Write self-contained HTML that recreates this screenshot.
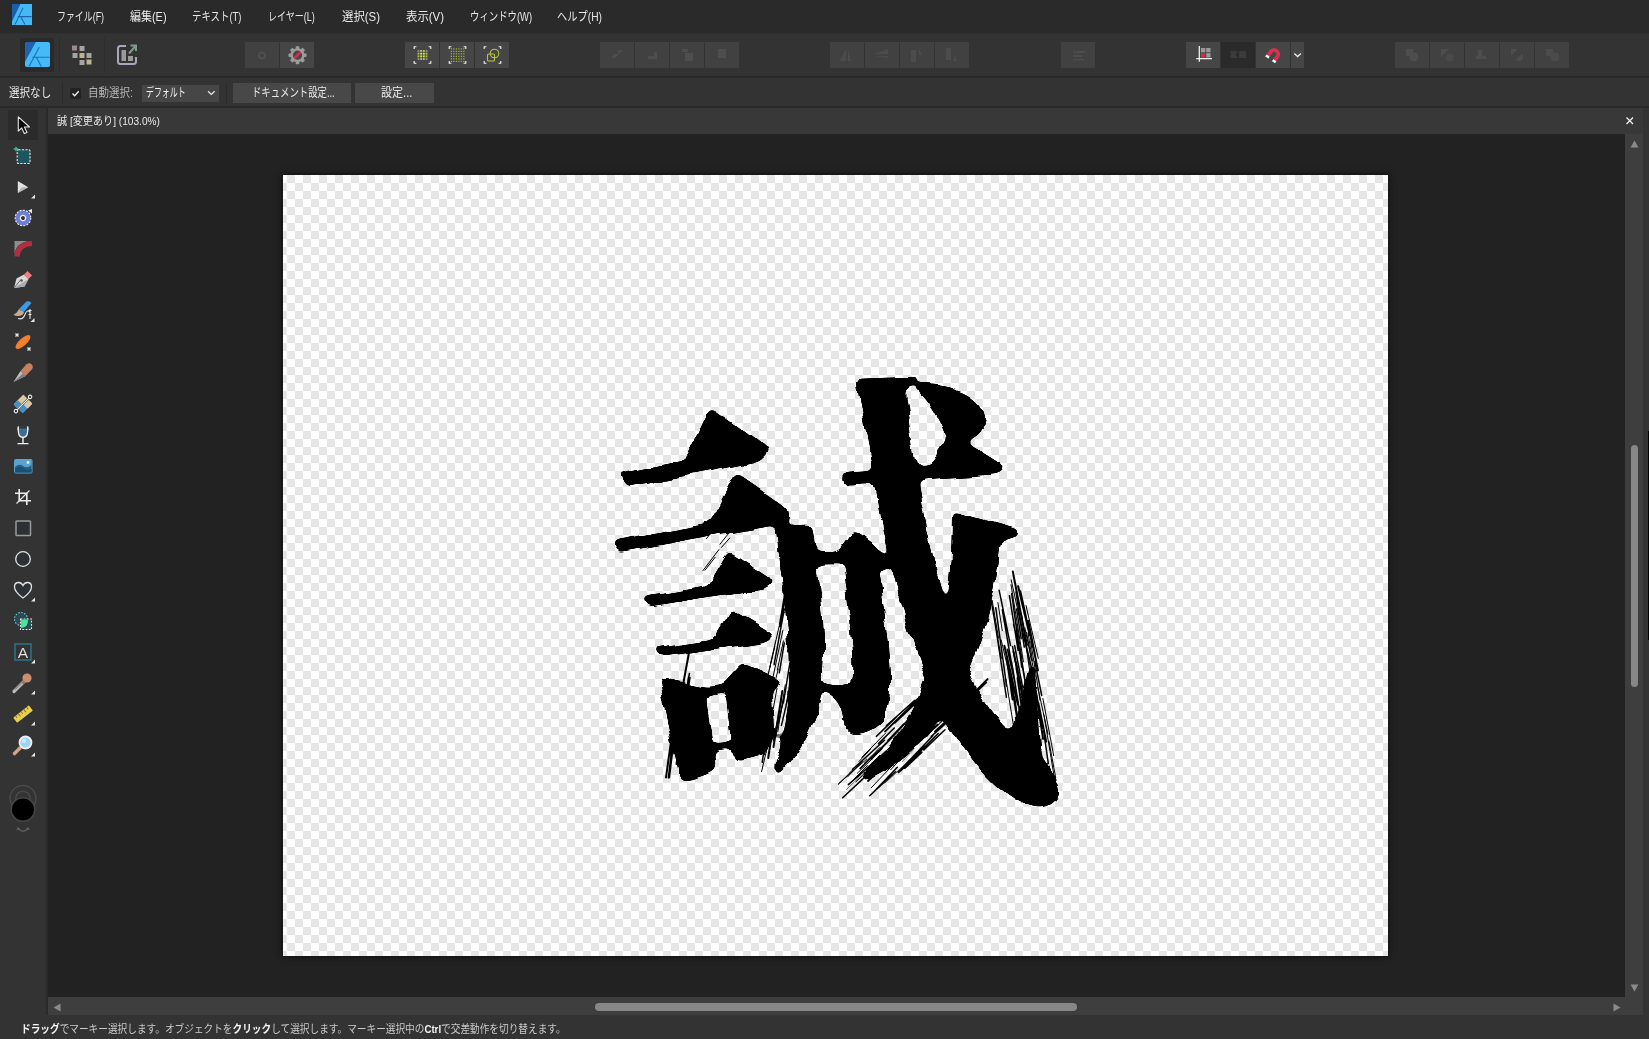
<!DOCTYPE html>
<html lang="ja">
<head>
<meta charset="utf-8">
<title>誠 [変更あり] (103.0%)</title>
<style>
*{box-sizing:border-box;margin:0;padding:0}
html,body{width:1649px;height:1039px;overflow:hidden;background:#333}
body{position:relative;font-family:"Liberation Sans","Noto Sans CJK JP",sans-serif;font-size:12px;color:#e6e6e6;-webkit-font-smoothing:antialiased}
.abs{position:absolute}
#menubar span,.t{filter:grayscale(1)}
.t{position:absolute;white-space:nowrap;line-height:18px;height:18px;transform-origin:0 50%;color:#e8e8e8}
.t b{color:#f4f4f4;font-weight:700}
#menubar{left:0;top:0;width:1649px;height:33px;background:#2a2a2a}
#menubar span{position:absolute;top:1px;height:33px;line-height:33px;white-space:nowrap;color:#e8e8e8;font-size:12px;transform-origin:0 50%}
#toolbar{left:0;top:33px;width:1649px;height:43px;background:#333;border-top:1px solid #2f2f2f}
#ctxbar{left:0;top:76px;width:1649px;height:32px;background:#333;border-top:2px solid #292929;border-bottom:2px solid #292929}
.tb{position:absolute;top:8px;height:26px;width:34px;background:#464646}
.tb.dim{background:#414141}
.tb.dark{background:#2a2a2a}
.tb svg{display:block}
#tools{left:0;top:108px;width:48px;height:931px;background:#333;border-right:2px solid #2a2a2a}
#tabbar{left:48px;top:108px;width:1595px;height:26px;background:#383838}
#work{left:48px;top:134px;width:1577px;height:863px;background:#222222}
#vscroll{left:1625px;top:134px;width:18px;height:881px;background:#3e3e3e}
#hscroll{left:48px;top:997px;width:1578px;height:18px;background:#3e3e3e}
#status{left:0;top:1015px;width:1649px;height:24px;background:#333}
#doc{left:283px;top:175px;width:1105px;height:781px;background-color:#fff;overflow:hidden;box-shadow:0 0 6px 1px rgba(0,0,0,.55);
background-image:conic-gradient(#e6e6e6 25%,#fff 0 50%,#e6e6e6 0 75%,#fff 0);background-size:16px 16px;background-position:-4px 0}
.ink{position:absolute;left:0;top:0;width:440px;height:470px;line-height:440px;font-size:440px;font-family:"Noto Serif CJK SC",serif;color:#000;transform-origin:0 0;paint-order:stroke fill;}
#inkA{font-weight:900;-webkit-text-stroke:0px #000;clip-path:polygon(-20px -20px,173.5px -20px,173.5px 186px,173.5px 186px,173.5px 292px,166px 300px,159px 320px,156px 360px,151px 400px,143px 422px,127px 445px,109px 470px,-20px 470px);transform:matrix3d(1.106565,-0.3706125,0,-0.0003986969,0.8914208,1.958157,0,0.001756807,0,0,1,0,278.5585,207.5127,0,1)}
#inkB{font-weight:700;-webkit-text-stroke:0px #000;clip-path:polygon(600px -20px,265px -20px,265px 185px,172.5px 185px,172.5px 186px,172.5px 292px,165px 300px,158px 320px,155px 360px,150px 400px,142px 422px,126px 445px,108px 470px,600px 470px);transform:matrix3d(0.4382253,-0.2217433,0,-0.0005457777,0.03723457,0.7697025,0,-0.0001223049,0,0,1,0,349.09,205.9681,0,1)}
#inkwrap{position:absolute;left:0;top:0;width:1105px;height:781px;filter:url(#brush)}
</style>
</head>
<body>
<div id="menubar" class="abs">
<svg class="abs" style="left:12px;top:4px" width="20" height="21" viewBox="0 0 21 19" preserveAspectRatio="none"><rect width="21" height="19" rx="1.5" fill="#2f9ee6"/><path d="M0 0H9L0 16Z" fill="#1c5fa8"/><path d="M9 0H21V19H0V16Z" fill="#46b9f5"/><path d="M3.2 18.6 11.6 3.4 M6 11.4H20.6 M9.2 11.4 13.6 18.6" stroke="#1a64ad" stroke-width="1" fill="none"/></svg>
<span id="m1" style="transform:scaleX(0.743);left:57px">ファイル(F)</span>
<span id="m2" style="transform:scaleX(0.915);left:130px">編集(E)</span>
<span id="m3" style="transform:scaleX(0.786);left:192px">テキスト(T)</span>
<span id="m4" style="transform:scaleX(0.75);left:268px">レイヤー(L)</span>
<span id="m5" style="transform:scaleX(0.95);left:342px">選択(S)</span>
<span id="m6" style="transform:scaleX(0.95);left:406px">表示(V)</span>
<span id="m7" style="transform:scaleX(0.782);left:470px">ウィンドウ(W)</span>
<span id="m8" style="transform:scaleX(0.854);left:557px">ヘルプ(H)</span>
</div>
<div id="toolbar" class="abs">
<div class="abs" style="left:20px;top:4px;width:34px;height:34px;background:#2a2a2a"></div>
<svg class="abs" style="left:25px;top:8px" width="25" height="25" viewBox="0 0 25 25"><rect width="25" height="25" rx="2.5" fill="#2f9ee6"/><path d="M0 2.5Q0 0 2.5 0H11L0 20Z" fill="#1f62ad"/><path d="M11 0H22.5Q25 0 25 2.5V22.5Q25 25 22.500 25H2.500Q0 25 0 22.500V20Z" fill="#46baf6"/><path d="M4 24.500 14.300 5 M7.400 15.300H24.600 M11.300 15.300 16.300 24.500" stroke="#1f6fbd" stroke-width="1.100" fill="none"/></svg>
<div class="abs" style="left:59px;top:3px;width:1px;height:36px;background:#2d2d2d"></div>
<div class="abs" style="left:104px;top:3px;width:1px;height:36px;background:#2d2d2d"></div>
<svg class="abs" style="left:71px;top:10px" width="22" height="22" viewBox="0 0 22 22"><rect x="1" y="1.500" width="5" height="5" fill="#9d8790"/><rect x="8.500" y="2" width="5" height="5" fill="#a4a4a4"/><rect x="1.500" y="9" width="5" height="5" fill="#a4a4a4"/><rect x="8.500" y="9" width="5" height="5" fill="#bfb187"/><rect x="15.500" y="9" width="5" height="5" fill="#a4a4a4"/><rect x="8.500" y="16" width="5" height="5" fill="#a4a4a4"/><rect x="15.500" y="15.500" width="5" height="5" fill="#bdb58e"/></svg>
<svg class="abs" style="left:116px;top:9px" width="23" height="23" viewBox="0 0 23 23"><path d="M10 3H4.500Q2 3 2 5.500V18.500Q2 21 4.500 21H17.500Q20 21 20 18.500V14" fill="none" stroke="#a8a8bd" stroke-width="2"/><rect x="5.500" y="7" width="4.500" height="11" fill="#9a9a9a"/><rect x="12" y="13" width="5" height="5" fill="#9a9a9a"/><path d="M13 10.500 20 2.500M14.500 2.500H20V8" fill="none" stroke="#7d9b8b" stroke-width="2"/></svg>
<div class="tb dim" style="left:245px;width:34px"><svg width="34" height="26"><circle cx="17" cy="13.500" r="3" fill="none" stroke="#4f4f4f" stroke-width="2"/></svg></div>
<div class="tb " style="left:280px;width:34px"><svg width="34" height="26" viewBox="0 0 34 26"><g transform="translate(17.500 13.200)"><g fill="#9c9c9c"><rect x="-1.800" y="-9" width="3.600" height="4" rx=".8" transform="rotate(0)"/><rect x="-1.800" y="-9" width="3.600" height="4" rx=".8" transform="rotate(45)"/><rect x="-1.800" y="-9" width="3.600" height="4" rx=".8" transform="rotate(90)"/><rect x="-1.800" y="-9" width="3.600" height="4" rx=".8" transform="rotate(135)"/><rect x="-1.800" y="-9" width="3.600" height="4" rx=".8" transform="rotate(180)"/><rect x="-1.800" y="-9" width="3.600" height="4" rx=".8" transform="rotate(225)"/><rect x="-1.800" y="-9" width="3.600" height="4" rx=".8" transform="rotate(270)"/><rect x="-1.800" y="-9" width="3.600" height="4" rx=".8" transform="rotate(315)"/></g><circle r="5.800" fill="none" stroke="#9c9c9c" stroke-width="2.400"/><path d="M-2.300 2.300 2.300-2.300" stroke="#d22f4f" stroke-width="2.600" stroke-linecap="round"/></g></svg></div>
<div class="tb " style="left:405px;width:34px"><svg width="34" height="26" viewBox="0 0 34 26"><path d="M11.399999999999999 4.699999999999999H9.2V6.8999999999999995M11.399999999999999 21.3H9.2V19.1M23.6 4.699999999999999H25.8V6.8999999999999995M23.6 21.3H25.8V19.1" fill="none" stroke="#f2f2f2" stroke-width="1.100"/><rect x="12.50" y="8.00" width="1.900" height="1.900" fill="#8c8c8c"/><rect x="12.50" y="10.70" width="1.900" height="1.900" fill="#b4bf5a"/><rect x="12.50" y="13.40" width="1.900" height="1.900" fill="#b4bf5a"/><rect x="12.50" y="16.10" width="1.900" height="1.900" fill="#8c8c8c"/><rect x="15.20" y="8.00" width="1.900" height="1.900" fill="#b4bf5a"/><rect x="15.20" y="10.70" width="1.900" height="1.900" fill="#d6ea3c"/><rect x="15.20" y="13.40" width="1.900" height="1.900" fill="#d6ea3c"/><rect x="15.20" y="16.10" width="1.900" height="1.900" fill="#b4bf5a"/><rect x="17.90" y="8.00" width="1.900" height="1.900" fill="#b4bf5a"/><rect x="17.90" y="10.70" width="1.900" height="1.900" fill="#d6ea3c"/><rect x="17.90" y="13.40" width="1.900" height="1.900" fill="#d6ea3c"/><rect x="17.90" y="16.10" width="1.900" height="1.900" fill="#b4bf5a"/><rect x="20.60" y="8.00" width="1.900" height="1.900" fill="#8c8c8c"/><rect x="20.60" y="10.70" width="1.900" height="1.900" fill="#b4bf5a"/><rect x="20.60" y="13.40" width="1.900" height="1.900" fill="#b4bf5a"/><rect x="20.60" y="16.10" width="1.900" height="1.900" fill="#8c8c8c"/></svg></div>
<div class="tb " style="left:440px;width:34px"><svg width="34" height="26" viewBox="0 0 34 26"><path d="M11.399999999999999 4.699999999999999H9.2V6.8999999999999995M11.399999999999999 21.3H9.2V19.1M23.6 4.699999999999999H25.8V6.8999999999999995M23.6 21.3H25.8V19.1" fill="none" stroke="#f2f2f2" stroke-width="1.100"/><rect x="10.80" y="6.30" width="1.100" height="1.100" fill="#bccb4a"/><rect x="10.80" y="8.80" width="1.100" height="1.100" fill="#bccb4a"/><rect x="10.80" y="11.30" width="1.100" height="1.100" fill="#bccb4a"/><rect x="10.80" y="13.80" width="1.100" height="1.100" fill="#bccb4a"/><rect x="10.80" y="16.30" width="1.100" height="1.100" fill="#bccb4a"/><rect x="10.80" y="18.80" width="1.100" height="1.100" fill="#bccb4a"/><rect x="13.30" y="6.30" width="1.100" height="1.100" fill="#bccb4a"/><rect x="13.30" y="8.80" width="1.100" height="1.100" fill="#bccb4a"/><rect x="13.30" y="11.30" width="1.100" height="1.100" fill="#bccb4a"/><rect x="13.30" y="13.80" width="1.100" height="1.100" fill="#bccb4a"/><rect x="13.30" y="16.30" width="1.100" height="1.100" fill="#bccb4a"/><rect x="13.30" y="18.80" width="1.100" height="1.100" fill="#bccb4a"/><rect x="15.80" y="6.30" width="1.100" height="1.100" fill="#bccb4a"/><rect x="15.80" y="8.80" width="1.100" height="1.100" fill="#bccb4a"/><rect x="15.80" y="11.30" width="1.100" height="1.100" fill="#bccb4a"/><rect x="15.80" y="13.80" width="1.100" height="1.100" fill="#bccb4a"/><rect x="15.80" y="16.30" width="1.100" height="1.100" fill="#bccb4a"/><rect x="15.80" y="18.80" width="1.100" height="1.100" fill="#bccb4a"/><rect x="18.30" y="6.30" width="1.100" height="1.100" fill="#bccb4a"/><rect x="18.30" y="8.80" width="1.100" height="1.100" fill="#bccb4a"/><rect x="18.30" y="11.30" width="1.100" height="1.100" fill="#bccb4a"/><rect x="18.30" y="13.80" width="1.100" height="1.100" fill="#bccb4a"/><rect x="18.30" y="16.30" width="1.100" height="1.100" fill="#bccb4a"/><rect x="18.30" y="18.80" width="1.100" height="1.100" fill="#bccb4a"/><rect x="20.80" y="6.30" width="1.100" height="1.100" fill="#bccb4a"/><rect x="20.80" y="8.80" width="1.100" height="1.100" fill="#bccb4a"/><rect x="20.80" y="11.30" width="1.100" height="1.100" fill="#bccb4a"/><rect x="20.80" y="13.80" width="1.100" height="1.100" fill="#bccb4a"/><rect x="20.80" y="16.30" width="1.100" height="1.100" fill="#bccb4a"/><rect x="20.80" y="18.80" width="1.100" height="1.100" fill="#bccb4a"/><rect x="23.30" y="6.30" width="1.100" height="1.100" fill="#bccb4a"/><rect x="23.30" y="8.80" width="1.100" height="1.100" fill="#bccb4a"/><rect x="23.30" y="11.30" width="1.100" height="1.100" fill="#bccb4a"/><rect x="23.30" y="13.80" width="1.100" height="1.100" fill="#bccb4a"/><rect x="23.30" y="16.30" width="1.100" height="1.100" fill="#bccb4a"/><rect x="23.30" y="18.80" width="1.100" height="1.100" fill="#bccb4a"/></svg></div>
<div class="tb " style="left:475px;width:34px"><svg width="34" height="26" viewBox="0 0 34 26"><path d="M11.399999999999999 4.699999999999999H9.2V6.8999999999999995M11.399999999999999 21.3H9.2V19.1M23.6 4.699999999999999H25.8V6.8999999999999995M23.6 21.3H25.8V19.1" fill="none" stroke="#f2f2f2" stroke-width="1.100"/><rect x="12.500" y="12" width="7" height="7" rx="1" fill="none" stroke="#b9c640" stroke-width="1.100"/><circle cx="19.500" cy="11.500" r="4.300" fill="none" stroke="#b9c640" stroke-width="1.100"/></svg></div>
<div class="tb dim" style="left:600px;width:34px"><svg width="34" height="26"><path d="M11 16l4-4h4l-4 4zM17 11l3-3h3l-3 3z" fill="#4e4e4e"/></svg></div>
<div class="tb dim" style="left:635px;width:34px"><svg width="34" height="26"><path d="M13 17h9v-7h-3v4h-6z" fill="#4e4e4e"/></svg></div>
<div class="tb dim" style="left:670px;width:34px"><svg width="34" height="26"><path d="M12 7h6v3h-6zM15 11h8v8h-8z" fill="#4e4e4e"/></svg></div>
<div class="tb dim" style="left:705px;width:34px"><svg width="34" height="26"><path d="M13 7h8v9h-8z" fill="#4e4e4e"/></svg></div>
<div class="tb dim" style="left:830px;width:34px"><svg width="34" height="26"><path d="M16 7v12h-6zM18 7v12h3z" fill="#4c4c4c"/></svg></div>
<div class="tb dim" style="left:865px;width:34px"><svg width="34" height="26"><path d="M9 12l14-5v5zM9 14h14v2z" fill="#4c4c4c"/></svg></div>
<div class="tb dim" style="left:900px;width:34px"><svg width="34" height="26"><path d="M11 8h5v12h-5zM19 7v6h3" fill="#4c4c4c"/></svg></div>
<div class="tb dim" style="left:935px;width:34px"><svg width="34" height="26"><path d="M11 6h5v12h-5zM19 13v6h3" fill="#4c4c4c"/></svg></div>
<div class="tb dim" style="left:1061px;width:34px"><svg width="34" height="26"><path d="M12 9h12v2h-12zM12 13h9v2h-9zM12 17h11v1.500h-11z" fill="#4d4d4d"/></svg></div>
<div class="tb " style="left:1186px;width:34px"><svg width="34" height="26" viewBox="0 0 34 26"><path d="M13.300 4V19.700M10.200 16.700H26" stroke="#f0f0f0" stroke-width="1.300" fill="none"/><rect x="15" y="6" width="4.300" height="4.300" fill="#9a9a9a"/><rect x="20.200" y="6" width="4.300" height="4.300" fill="#9a9a9a"/><rect x="15" y="11.200" width="4.300" height="4.300" fill="#c9304f"/><rect x="20.200" y="11.200" width="4.300" height="4.300" fill="#9a9a9a"/></svg></div>
<div class="tb dark" style="left:1221px;width:34px"><svg width="34" height="26"><path d="M9.500 9h7v7h-7zM18 9h7v7h-7z" fill="#3b3b3b"/><path d="M15 10.500l4 2-4 2z" fill="#2a2a2a"/></svg></div>
<div class="tb " style="left:1256px;width:34px"><svg width="34" height="26" viewBox="0 0 34 26"><g transform="translate(17.800 12.600) rotate(35)"><path d="M-6 4.500V-.5A6 6 0 0 1 6-.5V4.500H2.200V-.5A2.200 2.200 0 0 0-2.200-.5V4.500Z" fill="#d9314e"/><rect x="-6" y="4" width="3.800" height="2.600" fill="#f3f3f3"/><rect x="2.200" y="4" width="3.800" height="2.600" fill="#f3f3f3"/><path d="M-6.300 6.600h4.300v1.500h-4.300zM2 6.600h4.300v1.500h-4.300z" fill="#1f5b44"/></g></svg></div>
<div class="tb " style="left:1291px;width:13px"><svg width="13" height="26"><path d="M3.300 11.500l3.300 3 3.300-3" fill="none" stroke="#ededed" stroke-width="1.300"/></svg></div>
<div class="tb dim" style="left:1395px;width:34px"><svg width="34" height="26"><path d="M11 7h7v7h-7z" fill="#4d4d4d"/><circle cx="19" cy="15" r="4.500" fill="#4d4d4d"/></svg></div>
<div class="tb dim" style="left:1430px;width:34px"><svg width="34" height="26"><path d="M11 7h8l-8 8z" fill="#4d4d4d"/><circle cx="19.500" cy="15.500" r="4" fill="#4a4a4a"/></svg></div>
<div class="tb dim" style="left:1465px;width:34px"><svg width="34" height="26"><path d="M13 8h4v6h-4zM11 14h10v3h-10z" fill="#4d4d4d"/></svg></div>
<div class="tb dim" style="left:1500px;width:34px"><svg width="34" height="26"><path d="M11 7h7l-7 7zM22 12a4 4 0 1 1-6 6z" fill="#4d4d4d"/></svg></div>
<div class="tb dim" style="left:1535px;width:34px"><svg width="34" height="26"><path d="M11 7h7v7h-7z" fill="#4d4d4d"/><circle cx="20" cy="15" r="4.500" fill="#4b4b4b"/></svg></div>
</div>
<div id="ctxbar" class="abs">
<span class="t" id="c1" style="transform:scaleX(0.88);left:9px;top:6px">選択なし</span>
<div class="abs" style="left:62px;top:4px;width:1px;height:22px;background:#2b2b2b"></div>
<div class="abs" style="left:70px;top:10px;width:11px;height:11px;background:#222;border-radius:2px"></div>
<svg class="abs" style="left:70px;top:10px" width="11" height="11"><path d="M2.500 5.500 4.700 7.700 8.700 3.200" fill="none" stroke="#f0f0f0" stroke-width="1.300"/></svg>
<span class="t" id="c2" style="transform:scaleX(0.877);left:88px;top:6px;color:#b4b4b4">自動選択:</span>
<div class="abs" style="left:142px;top:7px;width:77px;height:17px;background:#464646"></div>
<span class="t" id="c3" style="transform:scaleX(0.66);left:146px;top:6px;color:#f2f2f2">デフォルト</span>
<svg class="abs" style="left:206px;top:11px" width="11" height="8"><path d="M2 2.300 5.300 5.500 8.600 2.300" fill="none" stroke="#e8e8e8" stroke-width="1.200"/></svg>
<div class="abs" style="left:226px;top:4px;width:1px;height:22px;background:#2b2b2b"></div>
<div class="abs" style="left:233px;top:5px;width:118px;height:20px;background:#484848"></div>
<span class="t" id="c4" style="transform:scaleX(0.78);left:252px;top:6px">ドキュメント設定...</span>
<div class="abs" style="left:355px;top:5px;width:79px;height:20px;background:#484848"></div>
<span class="t" id="c5" style="transform:scaleX(0.92);left:381px;top:6px">設定...</span>
</div>
<div id="tools" class="abs">
<div class="abs" style="left:8px;top:2px;width:30px;height:30px;background:#2b2b2b"></div>
<svg class="abs" style="left:0;top:0" width="46" height="908" viewBox="0 0 46 908">
<g transform="translate(23 17)"><path d="M-4.700-8.200V6.200L-1.300 3 1.300 8.600 4 7.400 1.400 2H6.500Z" fill="#0a0a0a" stroke="#e4e4e4" stroke-width="1.100" stroke-linejoin="round"/></g>
<g transform="translate(23 48)"><rect x="-5.800" y="-6.300" width="12.800" height="13.800" rx="1.200" fill="#1d5661" stroke="#e9e9e9" stroke-width="1.100" stroke-dasharray="2.200 1.300"/><path d="M-7-9.300V-4.700M-9.300-7H-4.700" stroke="#35c29a" stroke-width="1.300"/></g>
<g transform="translate(23 79)"><path d="M-5.200-6V6L5.200.3Z" fill="#e3e3e3"/><path d="M-5.200 6 5.200.3-1.500.3Z" fill="#b5b5b5"/><path d="M12 7.500V11.500H8Z" fill="#e6e6e6"/></g>
<g transform="translate(23 110)"><circle r="7.800" fill="#6e7ed6" stroke="#eeeeee" stroke-width="1.100" stroke-dasharray="2 1.300"/><circle r="2.600" fill="#343434" stroke="#f2f2f2" stroke-width="1.300"/><path d="M5-7.500 9-9V-4.500Z" fill="#e8e8e8"/></g>
<g transform="translate(23 141)"><path d="M-8.500-8H4.500Q-7.500-5-8.500 5Z" fill="#8d8d8d"/><path d="M-6 7.500Q-5-5 9-5.500" fill="none" stroke="#b32e40" stroke-width="5.200"/></g>
<g transform="translate(23 172)"><path d="M-9 8-6.500-1.500 1-5.500 5.500-1 1.500 6.500Z" fill="#d9d9d9"/><path d="M-9 8-2-.5" stroke="#666" stroke-width="1"/><path d="M-9 8 1.500 6.500 5.500-1Z" fill="#a9a9a9"/><circle cx="-1.500" cy=".5" r="1.300" fill="#555"/><path d="M1-5.500 4.500-9 9-4.500 5.500-1Z" fill="#f07f80"/></g>
<g transform="translate(23 203)"><path d="M-4.500-1.500 3.500-9.500Q6.500-10.500 8.500-8L1 .8Z" fill="#3a9ce8"/><path d="M-4.500-1.500 1 .8Q.5 4.500-4 5-7.500 5.500-9.500 3.500-6 2.500-4.500-1.500Z" fill="#c9a98a"/><path d="M-5 7.500Q0 9 2 3.500T7 1" fill="none" stroke="#e8e8e8" stroke-width="1.100"/><path d="M7-2V8M5.500-.5H8.500M5.500 3.500H8.500" stroke="#e8e8e8" stroke-width="1.100"/><path d="M11.500 7V11H7.500Z" fill="#e6e6e6"/></g>
<g transform="translate(23 234)"><ellipse rx="9.500" ry="3.600" transform="rotate(-42)" fill="#f07f2e"/><path d="M-7.500-8.500-4.500-5.500M-7.500-5.500-4.500-8.500M4.500 5.500 7.500 8.500M4.500 8.500 7.500 5.500" stroke="#e8e8e8" stroke-width="1.300"/></g>
<g transform="translate(23 265)"><path d="M-2.500-2 3.500-8.800Q6.500-10.800 8.800-8.500 10.800-6 8.800-3.500L2.500 3Z" fill="#c4805f"/><path d="M-2.500-2 2.500 3-9.500 9Z" fill="#bdbdbd"/><path d="M-9.500 9 2.500 3 0 .5Z" fill="#7d7d7d"/></g>
<g transform="translate(23 296)"><g transform="rotate(-45)"><rect x="-7" y="-6.500" width="14" height="5.500" rx="1" fill="#d9c9a3"/><rect x="-7" y="-6.500" width="6" height="5.500" rx="1" fill="#4a8fbd"/><rect x="-7" y="1" width="14" height="5.500" rx="1" fill="#4a8fbd"/><rect x="0" y="1" width="7" height="5.500" rx="1" fill="#d9c9a3"/><path d="M-9 0H9" stroke="#efefef" stroke-width="1.200"/><circle cx="-10" r="1.700" fill="#343434" stroke="#efefef" stroke-width="1.100"/><circle cx="10" r="1.700" fill="#343434" stroke="#efefef" stroke-width="1.100"/></g></g>
<g transform="translate(23 327)"><path d="M-4.500-8.500Q-6 2 0 2.500 6 2 4.500-8.500" fill="#3d6f96" stroke="#efefef" stroke-width="1.300"/><path d="M-4.800-8.700H4.800V-6.500H-4.800Z" fill="#343434"/><path d="M-4.500-8.500Q-5-6.500-4.900-5M4.500-8.500Q5-6.500 4.900-5" fill="none" stroke="#efefef" stroke-width="1.300"/><path d="M0 2.500V8M-5.500 8.600H5.500" stroke="#efefef" stroke-width="1.400"/></g>
<g transform="translate(23 358)"><rect x="-8.500" y="-6.500" width="17.500" height="13.500" rx="1" fill="#245f85" stroke="#5fa2cb" stroke-width="1"/><path d="M-8 1Q-4-3 0 0T8.500-1V-6H-8Z" fill="#5aa3cf"/><path d="M-8 3Q-3-1 1 2.500T8.500 2.500V6.500H-8Z" fill="#1b4f73"/><circle cx="5" cy="-3.500" r="1.400" fill="#e4f1f9"/></g>
<g transform="translate(23 389)"><path d="M-3.800-8V3.800H8M-8-3.800H3.800V8" fill="none" stroke="#ededed" stroke-width="1.600"/><path d="M-6.500 6.500 6.500-6.500" stroke="#ededed" stroke-width="1.100"/></g>
<g transform="translate(23 420)"><rect x="-7" y="-7" width="14.500" height="14.500" rx=".8" fill="#2b3135" stroke="#9b9b9b" stroke-width="1.500"/></g>
<g transform="translate(23 451)"><circle r="7.300" fill="#2b3135" stroke="#e2e2e2" stroke-width="1.300"/></g>
<g transform="translate(23 482)"><path d="M0 8Q-8.500 2-8.500-3.200-8.500-7.500-4.500-7.500-1.500-7.500 0-4.500 1.500-7.500 4.500-7.500 8.500-7.500 8.500-3.200 8.500 2 0 8Z" fill="#2b3135" stroke="#e2e2e2" stroke-width="1.300"/><path d="M12 7.500V11.500H8Z" fill="#e6e6e6"/></g>
<g transform="translate(23 513)"><circle cx="-2" cy="-2" r="6.500" fill="#2a4a55" stroke="#5fd0d8" stroke-width="1.100" stroke-dasharray="1.600 1.400"/><rect x="-2.500" y="-2" width="11" height="10.500" fill="#2a4a55" stroke="#e9e9e9" stroke-width="1.100" stroke-dasharray="1.800 1.400"/><path d="M-2-1.500H5Q5.500 6.500-2 7Z" fill="#45e59a"/></g>
<g transform="translate(23 544)"><rect x="-8" y="-8" width="16" height="16" fill="none" stroke="#2f7d96" stroke-width="1.300"/><text x="0" y="5.800" text-anchor="middle" font-family="Liberation Sans,sans-serif" font-size="15.500" fill="#dcdcdc" style="filter:grayscale(1)">A</text><path d="M12 7.500V11.500H8Z" fill="#e6e6e6"/></g>
<g transform="translate(23 575)"><path d="M-9 8.500 1.500-2" stroke="#b9b9b9" stroke-width="3.200" stroke-linecap="round"/><path d="M-8 6.500 0-1.500" stroke="#8b8b8b" stroke-width="1.200"/><circle cx="4" cy="-5" r="4.600" fill="#c98f6e"/><path d="M-.5-1.500 1.500.5" stroke="#a4714f" stroke-width="3"/><path d="M12 7.500V11.500H8Z" fill="#e6e6e6"/></g>
<g transform="translate(23 606)"><g transform="rotate(-38)"><rect x="-10" y="-3.200" width="20" height="6.600" rx=".8" fill="#e8cf4d"/><path d="M-7-3.200V-.5M-3.500-3.200V.3M0-3.200V-.5M3.500-3.200V.3M7-3.200V-.5" stroke="#8a7422" stroke-width="1"/></g><path d="M12 7.500V11.500H8Z" fill="#e6e6e6"/></g>
<g transform="translate(23 637)"><path d="M-8.500 8.500-3 3" stroke="#d6a283" stroke-width="3.600" stroke-linecap="round"/><circle cx="2.500" cy="-2.500" r="6" fill="#9fd3f3" stroke="#efefef" stroke-width="1.800"/><circle cx="1" cy="-4" r="2.200" fill="#c9e8fa"/><path d="M12 7.500V11.500H8Z" fill="#e6e6e6"/></g>
<g><circle cx="23" cy="690.500" r="13" fill="#333" stroke="#484848" stroke-width="1.600"/><circle cx="23" cy="690.500" r="7.300" fill="none" stroke="#484848" stroke-width="1.600"/><circle cx="23" cy="701.500" r="11.800" fill="#000" stroke="#464646" stroke-width="1.600"/><path d="M18 720.500Q23 726 28 720.500" fill="none" stroke="#5e5e5e" stroke-width="1.400"/><path d="M16.300 722.300 17.600 718.800 20.500 721.200ZM29.700 722.300 28.400 718.800 25.500 721.200Z" fill="#5e5e5e"/></g>
</svg>
</div>
<div id="tabbar" class="abs">
<span class="t" id="tab1" style="transform:scaleX(0.92);left:8.500px;top:4px;font-size:11px">誠 [変更あり] (103.0%)</span>
<svg class="abs" style="left:1577px;top:8px" width="10" height="10"><path d="M1.500 1.500 8 8M8 1.500 1.500 8" stroke="#f0f0f0" stroke-width="1.300" fill="none"/></svg>
</div>
<div id="work" class="abs"></div>
<div id="vscroll" class="abs">
<svg class="abs" style="left:5px;top:6px" width="9" height="8"><path d="M4.500 .5 8.500 7.500H.5Z" fill="#8a8a8a"/></svg>
<div class="abs" style="left:6px;top:311px;width:7px;height:242px;border-radius:3.500px;background:#878787"></div>
<svg class="abs" style="left:5px;top:850px" width="9" height="8"><path d="M4.500 7.500 8.500 .5H.5Z" fill="#8a8a8a"/></svg>
</div>
<div id="hscroll" class="abs">
<svg class="abs" style="left:5px;top:6px" width="8" height="9"><path d="M.5 4.500 7.500 .5V8.500Z" fill="#8a8a8a"/></svg>
<div class="abs" style="left:547px;top:6px;width:482px;height:8px;border-radius:4px;background:#878787"></div>
<svg class="abs" style="left:1565px;top:6px" width="8" height="9"><path d="M7.500 4.500 .5 .5V8.500Z" fill="#8a8a8a"/></svg>
</div>
<div class="abs" style="left:1648px;top:431px;width:1px;height:209px;background:#000"></div>
<div id="status" class="abs">
<span class="t" id="st" style="transform:scaleX(0.878);left:21px;top:5px;font-size:11px;color:#c9c9c9"><b>ドラッグ</b>でマーキー選択します。オブジェクトを<b>クリック</b>して選択します。マーキー選択中の<b>Ctrl</b>で交差動作を切り替えます。</span>
</div>
<div id="doc" class="abs"><svg id="streaks" class="abs" style="left:0;top:0" width="1105" height="781" viewBox="0 0 1105 781" fill="none" stroke="#000" stroke-linecap="round"><path stroke-width="0.5" d="M737.4 560.8l11.2 57.1M741.9 530.0l7.5 31.9M729.8 492.7l5.8 42.2M744.4 506.2l9.9 56.2M741.8 528.9l7.4 48.7M616.2 543.3l-14.8 13.7M692.8 510.5l-30.7 31.6M631.4 573.7l-12.2 13.0M671.3 494.6l-40.6 36.5M647.7 537.6l-23.2 22.3M659.8 545.5l-15.5 15.1M630.4 581.6l-28.5 26.5M642.7 571.2l-40.7 36.4M643.8 534.8l-13.7 13.3M624.6 563.3l-23.6 23.3M589.3 590.0l-26.1 24.7M625.4 555.1l-24.0 25.1M578.6 586.4l-12.5 11.7M619.4 553.4l-28.4 27.9M514.2 440.6l-7.7 30.8M518.6 413.3l-10.2 42.2M492.6 465.4l-11.2 52.0M455.8 333.5l-10.2 11.6"/><path stroke-width="1.0" d="M743.0 430.6l12.3 52.7M733.0 493.1l8.8 51.7M747.7 466.6l9.4 58.9M728.0 409.6l12.4 77.1M745.1 458.0l4.4 28.0M742.3 506.7l5.7 35.0M754.7 511.9l10.2 47.1M742.1 571.7l6.1 41.3M735.3 434.4l13.6 66.1M738.8 440.7l9.3 65.1M709.2 425.4l6.3 37.6M718.1 464.7l8.4 35.3M722.9 504.3l11.9 72.4M759.9 523.5l10.8 57.1M742.6 517.8l8.4 58.2M728.2 404.9l13.3 60.9M744.3 556.7l7.2 48.8M752.0 547.1l11.5 55.9M741.8 452.7l10.3 48.7M743.6 457.2l4.7 27.2M761.0 539.9l12.4 75.3M749.8 523.5l11.2 74.3M714.9 427.5l4.4 28.2M765.9 566.0l6.8 36.6M733.7 449.0l10.4 70.8M731.9 547.6l9.5 53.0M611.7 588.1l-23.4 24.6M602.7 558.0l-23.9 24.3M686.7 517.2l-29.8 30.3M679.9 525.6l-25.7 25.5M669.0 502.9l-35.2 31.8M620.3 570.2l-32.1 33.8M641.5 543.7l-26.0 27.4M674.1 485.0l-24.5 22.8M626.4 565.3l-30.0 32.1M628.9 572.0l-21.2 22.7M657.4 515.7l-18.3 19.7M608.5 581.3l-25.5 22.7M606.6 572.5l-14.2 13.5M688.9 525.8l-24.9 26.2M627.7 560.9l-18.4 17.7M587.4 574.3l-11.3 12.1M681.4 494.7l-26.8 25.6M672.7 518.8l-18.6 17.2M631.7 567.1l-21.0 20.2M602.8 567.9l-11.9 12.1M628.7 561.4l-24.3 22.5M597.4 572.1l-16.0 16.0M570.3 594.5l-15.1 14.9M609.8 576.0l-17.3 17.6M579.6 586.1l-15.2 16.0M602.6 576.2l-28.7 26.7M584.4 590.5l-14.8 15.1M593.8 587.6l-20.9 19.2M583.7 584.1l-28.0 24.5M599.4 573.8l-25.1 24.5M521.6 451.0l-10.2 44.8M508.0 502.4l-4.8 27.0M498.4 525.7l-8.1 40.3M499.9 455.2l-10.0 47.5M484.4 502.6l-6.1 30.0M491.8 471.3l-10.0 42.3M502.3 509.8l-7.5 46.9M500.4 465.9l-6.0 28.9M514.0 448.9l-7.3 40.9M496.2 450.9l-9.3 41.5M522.9 427.2l-4.2 26.0M486.0 520.8l-6.4 34.9M494.0 513.2l-3.7 20.4M489.7 549.1l-11.1 47.4M485.7 552.3l-4.3 27.6M495.2 494.1l-7.9 32.2M405.3 502.2l-2.5 22.2M401.7 543.6l-7.1 37.1M402.9 545.1l-4.3 37.6M447.9 355.5l-10.9 13.7M443.4 343.1l-10.4 12.1M435.9 374.6l-15.9 21.0M432.1 382.3l-10.1 12.9M461.5 318.1l-16.7 20.8M446.7 363.1l-8.3 9.4M442.2 340.5l-18.7 23.0"/><path stroke-width="1.5" d="M731.6 470.5l14.2 74.5M750.3 500.9l9.1 52.4M733.6 434.1l4.6 29.6M704.9 406.4l13.2 76.9M711.4 443.4l12.0 78.9M741.7 463.7l9.3 39.9M737.6 416.1l12.0 55.8M732.6 456.0l14.5 76.4M760.5 555.2l4.8 33.2M744.7 547.2l8.9 40.2M733.0 416.9l8.3 55.2M751.9 486.5l6.8 34.0M728.7 418.8l10.1 73.4M740.4 543.6l18.0 75.9M728.6 487.2l12.0 73.6M749.6 540.2l10.2 67.8M716.1 415.2l11.4 55.2M734.3 502.7l9.7 68.8M730.6 449.6l8.1 33.9M755.5 527.6l8.0 39.2M732.7 486.3l13.0 65.3M729.5 471.5l14.7 73.6M736.4 539.7l14.5 75.6M719.3 434.8l11.9 69.0M712.8 432.8l10.8 78.3M726.4 420.7l8.7 54.6M724.4 474.3l7.2 32.0M731.5 522.0l8.8 62.4M739.3 526.1l8.1 53.2M651.8 540.7l-33.8 32.7M649.8 560.8l-30.4 32.1M648.6 535.9l-14.8 15.4M612.5 596.8l-25.8 24.0M611.3 553.0l-15.8 15.6M601.5 565.3l-31.9 29.1M652.3 528.0l-26.3 23.4M660.3 500.9l-32.9 30.4M648.4 513.5l-36.5 34.4M662.0 554.7l-21.2 20.2M660.7 498.5l-29.3 29.6M636.7 547.4l-22.9 20.3M625.3 544.4l-36.9 39.8M666.9 544.6l-18.6 16.8M631.8 525.4l-28.3 25.1M614.3 592.2l-23.4 24.5M655.2 558.5l-37.4 37.3M637.6 556.8l-19.2 18.2M625.2 558.7l-41.0 36.6M688.9 522.0l-37.2 34.5M669.3 531.5l-30.5 29.5M703.4 507.4l-34.3 32.7M613.5 541.9l-20.1 19.5M593.9 584.5l-28.5 25.1M594.8 576.1l-17.7 17.5M585.8 598.4l-26.1 24.3M523.8 429.1l-4.9 28.3M501.9 519.2l-9.5 40.9M501.3 434.1l-10.2 55.6M483.6 558.1l-4.4 29.2M518.5 434.7l-7.1 29.6M524.1 414.9l-7.6 48.1M513.5 461.5l-4.1 22.7M505.3 398.2l-8.7 51.3M501.3 468.0l-5.0 29.8M504.7 538.9l-4.0 25.3M506.7 515.4l-8.3 35.2M504.1 415.2l-7.3 36.4M522.2 404.4l-11.7 46.6M510.5 507.7l-6.9 34.4M506.8 488.5l-6.4 39.5M406.4 498.4l-4.6 27.5M401.8 526.9l-6.5 32.3M461.9 317.2l-19.0 22.4M451.1 330.0l-17.2 22.3M451.3 344.0l-10.0 11.3M459.3 326.2l-11.7 13.2"/><path stroke-width="2.0" d="M745.3 445.9l9.6 49.6M723.2 478.5l6.4 45.9M729.8 396.4l14.1 73.7M721.4 470.7l13.5 58.8M732.8 542.7l7.4 43.7M752.6 515.7l7.5 48.1M724.0 481.3l11.7 70.7M730.4 476.4l10.6 51.1M755.4 577.5l6.7 28.4M735.1 411.2l11.6 48.7M643.9 542.1l-26.7 28.8M641.4 571.5l-25.9 25.8M636.7 547.6l-35.4 33.9M646.9 513.3l-17.8 15.8M638.6 577.2l-16.8 15.8M704.6 504.1l-31.9 32.0M633.5 525.6l-31.3 30.8M620.9 549.3l-15.7 16.2M654.8 549.5l-21.0 19.6M605.5 584.3l-20.4 21.7M489.6 554.5l-4.4 28.5M511.7 517.6l-12.2 51.5M499.3 516.1l-8.8 56.0M511.5 435.9l-6.7 40.5M489.5 535.2l-5.9 25.7M517.9 467.8l-9.5 58.2M388.5 563.0l-5.5 39.4M406.7 502.7l-3.5 24.0M401.7 533.9l-5.5 31.9M405.9 478.0l-8.5 46.2M403.2 520.6l-3.6 31.7"/><path stroke-width="2.5" d="M401.2 526.5l-4.9 36.5M390.5 564.6l-4.6 37.8M398.0 507.8l-4.5 26.9M409.4 535.0l-4.9 39.9M394.6 545.9l-7.1 33.9M399.2 556.2l-5.4 32.6"/></svg><div id="inkwrap"><div class="ink" id="inkA">誠</div><div class="ink" id="inkB">誠</div></div></div>
<svg width="0" height="0" style="position:absolute"><defs>
<filter id="brush" x="-5%" y="-5%" width="110%" height="110%" color-interpolation-filters="sRGB">
<feGaussianBlur in="SourceGraphic" stdDeviation="3.200" result="b"/>
<feColorMatrix in="b" type="matrix" values="0 0 0 0 0 0 0 0 0 0 0 0 0 0 0 0 0 0 14 -6.300" result="r"/>
<feTurbulence type="fractalNoise" baseFrequency="0.02 0.05" numOctaves="2" seed="3" result="n"/>
<feDisplacementMap in="r" in2="n" scale="10" xChannelSelector="R" yChannelSelector="G"/>
</filter></defs></svg>
</body>
</html>
